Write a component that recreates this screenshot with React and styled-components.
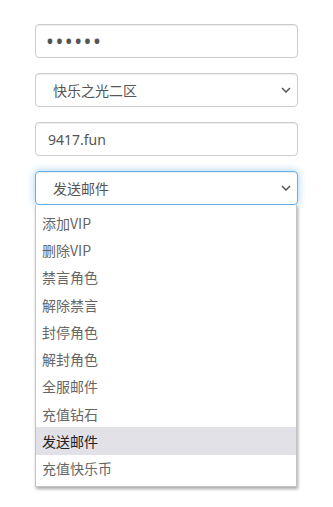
import React from "react";
import styled, { createGlobalStyle, css } from "styled-components";

const Global = createGlobalStyle`
  html, body { margin: 0; padding: 0; background: #fff; }
  body { min-height: 507px; font-family: "Noto Sans", "Noto Sans CJK SC", sans-serif; }
  * { box-sizing: border-box; }
`;

const Form = styled.div`
  display: flex;
  flex-direction: column;
  gap: 15px;
  width: 263px;
  margin: 24px 0 0 35px;
`;

const controlBase = css`
  height: 34px;
  width: 100%;
  border: 1px solid #ccc;
  border-radius: 4px;
  background: #fff;
  box-shadow: inset 0 1px 1px rgba(0, 0, 0, 0.075);
  font-family: "Noto Sans", "Noto Sans CJK SC", sans-serif;
  font-size: 14px;
  color: #555;
`;

const Input = styled.input`
  ${controlBase}
  display: block;
  padding: ${(p) => (p.type === "password" ? "0 10px" : "6px 12px")};
  outline: none;
  font-size: ${(p) => (p.type === "password" ? "21px" : "14px")};
  letter-spacing: ${(p) => (p.type === "password" ? "1.5px" : "0")};
`;

const SelectWrap = styled.div`
  position: relative;
`;

const SelectBox = styled.div`
  ${controlBase}
  display: flex;
  align-items: center;
  justify-content: space-between;
  padding: 0 6px 0 17px;
  font-family: "Noto Sans CJK SC", sans-serif;
  ${(p) =>
    p.$focused &&
    css`
      border-color: #66afe9;
      box-shadow: inset 0 1px 1px rgba(0, 0, 0, 0.075),
        0 0 8px rgba(102, 175, 233, 0.6);
    `}
`;

const Chevron = () => (
  <svg width="10" height="6" viewBox="0 0 10 6">
    <path d="M1 1 L5 5 L9 1" fill="none" stroke="#555" strokeWidth="1.5" />
  </svg>
);

const Popup = styled.div`
  position: absolute;
  top: 34px;
  left: 0;
  width: 262px;
  padding: 4px 0;
  background: #fff;
  border: 1px solid #c4c4c4;
  border-top: none;
  box-shadow: 1px 2px 3px rgba(0, 0, 0, 0.35);
  z-index: 10;
`;

const OptionRow = styled.div`
  height: 27.3px;
  display: flex;
  align-items: center;
  padding-left: 6px;
  font-family: "Noto Sans CJK SC", sans-serif;
  font-size: 14px;
  color: ${(p) => (p.$active ? "#222" : "#666")};
  background: ${(p) => (p.$active ? "#e2e1e7" : "transparent")};
`;

const options = [
  "添加VIP",
  "删除VIP",
  "禁言角色",
  "解除禁言",
  "封停角色",
  "解封角色",
  "全服邮件",
  "充值钻石",
  "发送邮件",
  "充值快乐币",
];

export default function App() {
  return (
    <>
      <Global />
      <Form>
        <Input type="password" defaultValue="123456" readOnly />
        <SelectWrap>
          <SelectBox>
            <span>快乐之光二区</span>
            <Chevron />
          </SelectBox>
        </SelectWrap>
        <Input type="text" defaultValue="9417.fun" readOnly />
        <SelectWrap>
          <SelectBox $focused>
            <span>发送邮件</span>
            <Chevron />
          </SelectBox>
          <Popup>
            {options.map((o) => (
              <OptionRow key={o} $active={o === "发送邮件"}>
                {o}
              </OptionRow>
            ))}
          </Popup>
        </SelectWrap>
      </Form>
    </>
  );
}
